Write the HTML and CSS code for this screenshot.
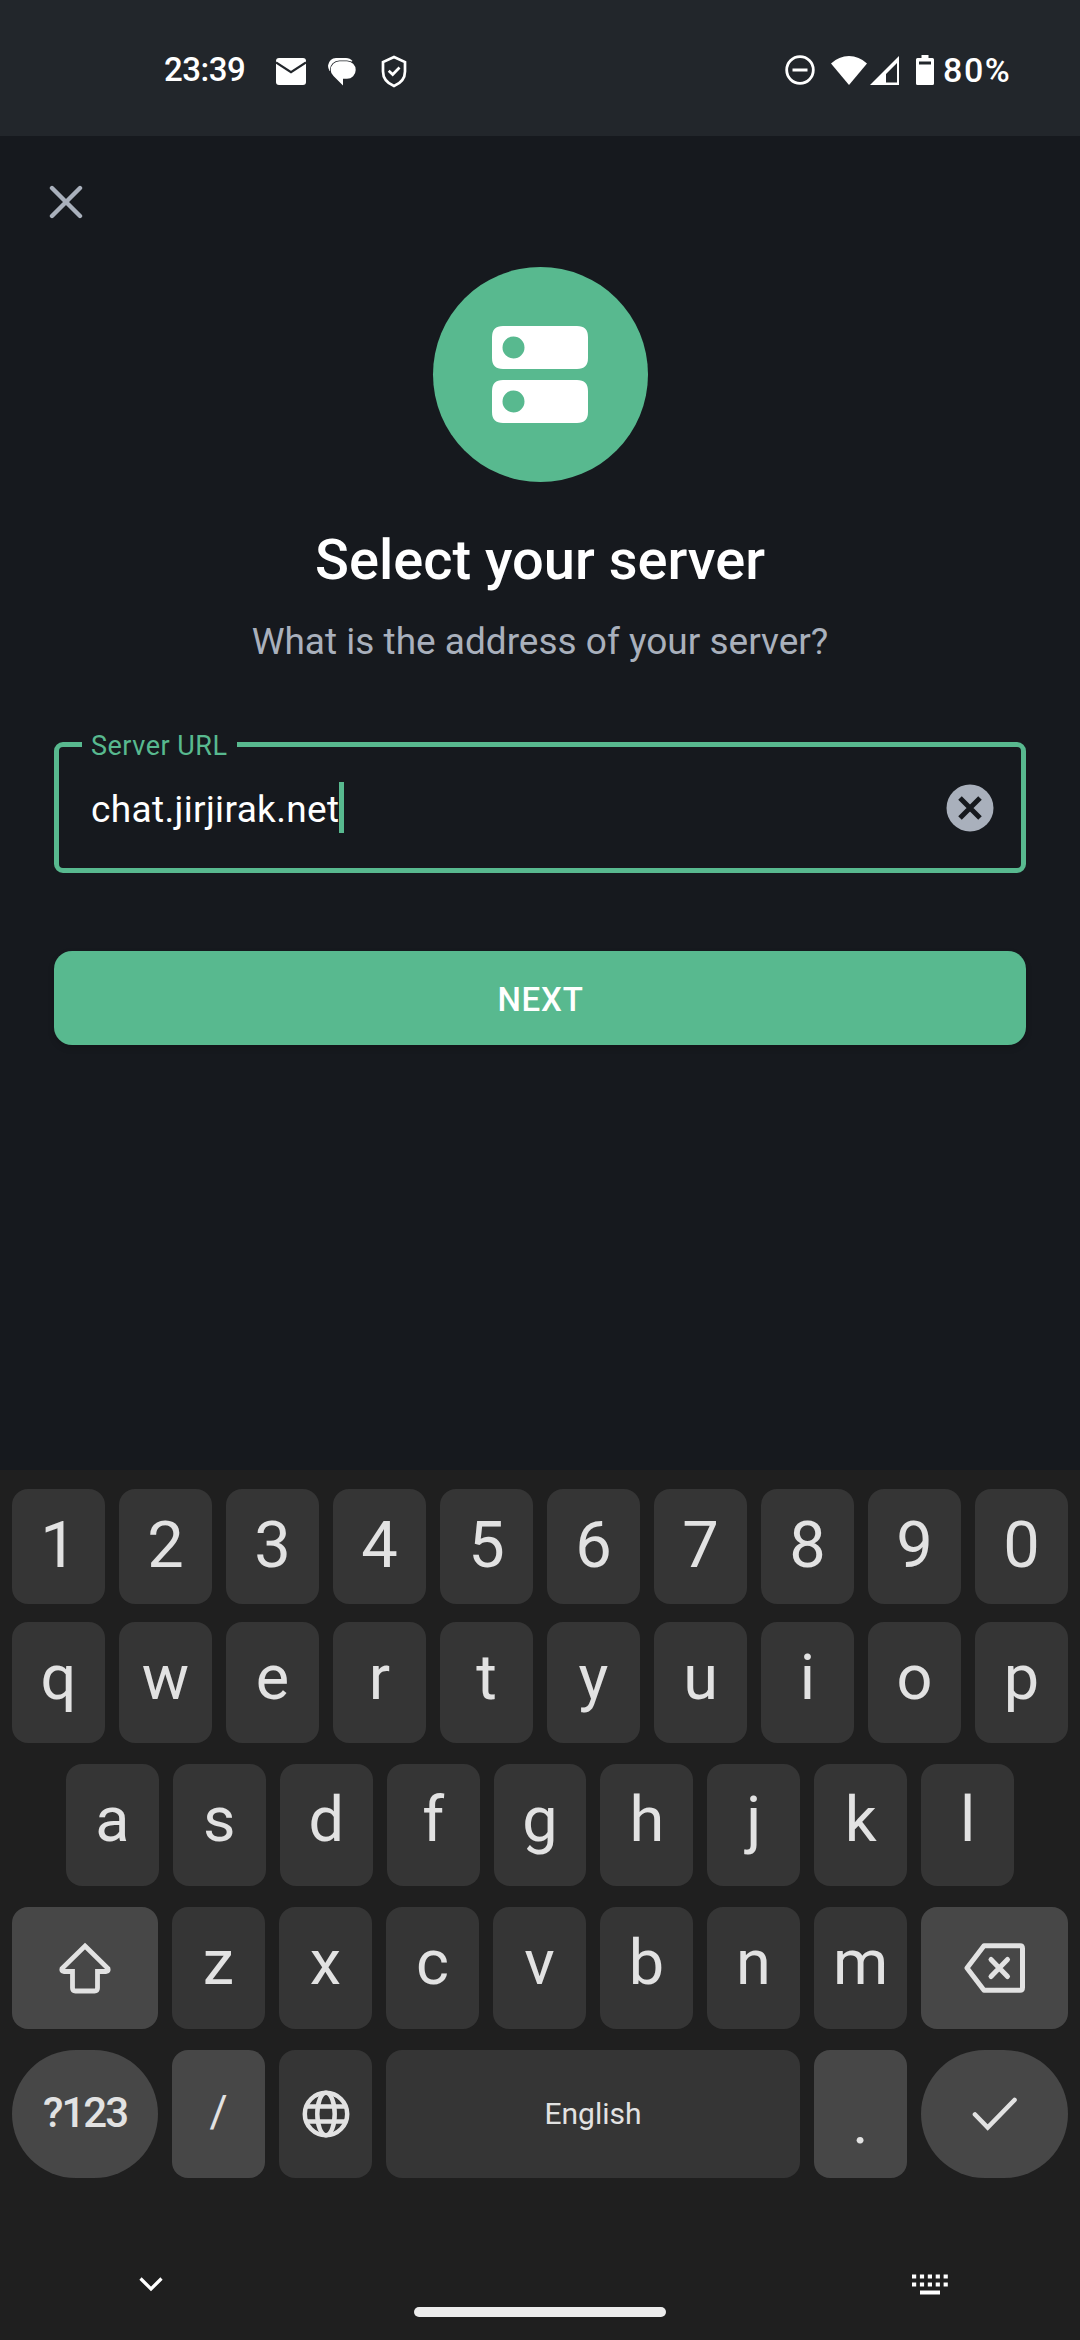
FILE: index.html
```html
<!DOCTYPE html>
<html lang="en">
<head>
<meta charset="utf-8">
<title>Select your server</title>
<link rel="stylesheet" href="styles.css">
</head>
<body>
<div class="screen">
  <header class="status">
    <div class="status-left">
      <span class="clock">23:39</span>
      <svg class="mail" width="30" height="27" viewBox="0 0 30 27"><rect width="30" height="27" rx="3" fill="#fff"/><path d="M0 4.500 15 14.200 30 4.500" fill="none" stroke="#22262b" stroke-width="2.200"/></svg>
      <svg class="chat" width="29" height="29" viewBox="0 0 29 29"><path d="M8 0H18Q22 0 24.500 3L8 14 1.500 13Q0 10 0 7.500Q1.500 0 8 0Z" fill="#fff"/><path d="M11.500 3.300H19A8.700 8.700 0 0 1 19 20.700H15V27.500L5.500 18Q2.700 15.500 2.700 12A8.700 8.700 0 0 1 11.500 3.300Z" fill="#fff" stroke="#22262b" stroke-width="1.800" paint-order="stroke"/></svg>
      <svg class="shield" width="26" height="33" viewBox="0 0 26 33"><path d="M13 2 24 7V16.500Q24 26.500 13 31 2 26.500 2 16.500V7Z" fill="none" stroke="#fff" stroke-width="2.700"/><path d="M7.700 15.700 11.700 19.500 18.500 12.500" fill="none" stroke="#fff" stroke-width="2.700"/></svg>
    </div>
    <div class="status-right">
      <svg width="30" height="30" viewBox="0 0 30 30"><circle cx="15" cy="15" r="13.300" fill="none" stroke="#fff" stroke-width="2.800"/><path d="M7.500 15H22.500" stroke="#fff" stroke-width="3"/></svg>
      <svg class="wifi" width="36" height="30" viewBox="0 0 36 30"><path d="M0 8.500Q8 1 18 1T36 8.500L18 30Z" fill="#fff"/></svg>
      <svg class="signal" width="29" height="30" viewBox="0 0 29 30"><path fill-rule="evenodd" d="M29 1V30H0ZM27 8 16 19V27.500H27Z" fill="#fff"/></svg>
      <svg class="battery" width="18" height="30" viewBox="0 0 18 30"><path fill-rule="evenodd" d="M5.500 0H12.500V3H16.500Q18 3 18 4.500V28.500Q18 30 16.500 30H1.500Q0 30 0 28.500V4.500Q0 3 1.500 3H5.500ZM3 6.500V9.500H15V6.500Z" fill="#fff"/></svg>
      <span class="percent">80%</span>
    </div>
  </header>

  <main class="content">
    <svg class="close" width="34" height="34" viewBox="0 0 34 34"><path d="M3 3 31 31M31 3 3 31" stroke="#a9b0bc" stroke-width="4.400" stroke-linecap="round"/></svg>
    <div class="logo">
      <svg width="96" height="98" viewBox="0 0 96 98"><path fill-rule="evenodd" d="M11 0H85Q96 0 96 11V32Q96 43 85 43H11Q0 43 0 32V11Q0 0 11 0ZM21.500 10.500A11 11 0 1 0 21.500 32.500A11 11 0 1 0 21.500 10.500ZM11 54H85Q96 54 96 65V86Q96 97 85 97H11Q0 97 0 86V65Q0 54 11 54ZM21.500 64.500A11 11 0 1 0 21.500 86.500A11 11 0 1 0 21.500 64.500Z" fill="#fff"/></svg>
    </div>
    <h1 class="title">Select your server</h1>
    <p class="subtitle">What is the address of your server?</p>
    <div class="field">
      <span class="label">Server URL</span>
      <span class="value">chat.jirjirak.net</span><span class="caret"></span>
      <svg class="clear" width="48" height="48" viewBox="0 0 48 48"><circle cx="24" cy="24" r="23.500" fill="#a9b0bc"/><path d="M14 14 34 34M34 14 14 34" stroke="#16191e" stroke-width="5"/></svg>
    </div>
    <button class="next">NEXT</button>
  </main>

  <section class="keyboard">
    <div class="row digits"><span class="key">1</span><span class="key">2</span><span class="key">3</span><span class="key">4</span><span class="key">5</span><span class="key">6</span><span class="key">7</span><span class="key">8</span><span class="key">9</span><span class="key">0</span></div>
    <div class="row top"><span class="key">q</span><span class="key">w</span><span class="key">e</span><span class="key">r</span><span class="key">t</span><span class="key">y</span><span class="key">u</span><span class="key">i</span><span class="key">o</span><span class="key">p</span></div>
    <div class="row home"><span class="key">a</span><span class="key">s</span><span class="key">d</span><span class="key">f</span><span class="key">g</span><span class="key">h</span><span class="key">j</span><span class="key">k</span><span class="key">l</span></div>
    <div class="row bottom">
      <span class="key mod shift"><svg width="54" height="52" viewBox="0 0 54 52"><path d="M27 4 50 26.500Q51 29.500 48 29.500H39.500V46Q39.500 49 36.500 49H17.500Q14.500 49 14.500 46V29.500H6Q3 29.500 4 26.500Z" fill="none" stroke="#e2e2e2" stroke-width="4.800"/></svg></span>
      <span class="key">z</span><span class="key">x</span><span class="key">c</span><span class="key">v</span><span class="key">b</span><span class="key">n</span><span class="key">m</span>
      <span class="key mod wide"><svg width="62" height="50" viewBox="0 0 62 50"><path d="M20 2.700H56Q58.500 2.700 58.500 5.500V44.500Q58.500 47.300 56 47.300H20L3 25Z" fill="none" stroke="#e2e2e2" stroke-width="5" stroke-linejoin="round"/><path d="M27 16.500 43.500 33.500M43.500 16.500 27 33.500" stroke="#e2e2e2" stroke-width="5" stroke-linecap="round"/></svg></span>
    </div>
    <div class="row space">
      <span class="key mod pill symbols">?123</span>
      <span class="key mod slash">/</span>
      <span class="key"><svg width="48" height="48" viewBox="0 0 48 48"><g fill="none" stroke="#e2e2e2" stroke-width="4.500"><circle cx="24" cy="24" r="21.200"/><ellipse cx="24" cy="24" rx="8.700" ry="21.200"/><path d="M4 16.500H44M4 31.500H44"/></g></svg></span>
      <span class="key spacebar">English</span>
      <span class="key mod dot">.</span>
      <span class="key mod pill wide"><svg width="46" height="34" viewBox="0 0 46 34"><path d="M3 17.500 15.700 30.500 42.500 3" fill="none" stroke="#e2e2e2" stroke-width="4.600" stroke-linecap="round"/></svg></span>
    </div>
    <footer class="nav">
      <svg class="chevron" width="24" height="15" viewBox="0 0 24 15"><path d="M1.500 1.500 12 12 22.500 1.500" fill="none" stroke="#fff" stroke-width="3.200"/></svg>
      <span class="pillbar"></span>
      <svg class="switcher" width="37" height="21" viewBox="0 0 37 21"><path d="M0 2.500H37M0 10.500H37" stroke="#fff" stroke-width="4.200" stroke-dasharray="4.200 3.700"/><path d="M8 18.500H28" stroke="#fff" stroke-width="4"/></svg>
    </footer>
  </section>
</div>
</body>
</html>
```
FILE: styles.css
```css
* { box-sizing: border-box; }
body { margin: 0; background: #16191e; font-family: Roboto, sans-serif; }
svg { display: block; flex: none; }
.screen { width: 1080px; height: 2340px; display: flex; flex-direction: column; overflow: hidden; }

.status { height: 136px; flex: none; padding: 0 69px 0 164px; background: #22262b; color: #fff; display: flex; justify-content: space-between; align-items: flex-start; font-size: 33px; font-weight: 500; line-height: 40px; }
.status-left, .status-right { display: flex; align-items: center; height: 40px; margin-top: 50px; }
.clock { width: 112px; letter-spacing: -0.5px; }
.mail { margin-top: 3px; }
.chat { margin: 5px 24px 0 22px; }
.shield { margin-top: 2px; }
.wifi { margin-left: 16px; }
.signal { margin-left: 3px; }
.battery { margin: 0 9px 0 17px; }
.percent { width: 68px; font-size: 34px; letter-spacing: 1.6px; white-space: nowrap; }

.content { flex: 1; padding: 49px 54px 0; display: flex; flex-direction: column; align-items: center; }
.close { align-self: flex-start; margin-left: -5px; }
.logo { width: 215px; height: 215px; flex: none; margin-top: 48px; border-radius: 50%; background: #58b98f; display: flex; align-items: center; justify-content: center; }
.title { margin: 43px 0 0; color: #fff; font-size: 56px; font-weight: 500; line-height: 70px; }
.subtitle { margin: 23px 0 0; color: #a9b0bc; font-size: 37px; line-height: 48px; }
.field { position: relative; width: 972px; height: 131px; flex: none; margin-top: 76px; padding: 0 27px 0 32px; border: 5px solid #58b98f; border-radius: 9px; display: flex; align-items: center; }
.label { position: absolute; left: 23px; top: -17px; width: 155px; padding-left: 9px; background: #16191e; color: #58b98f; font-size: 27px; line-height: 32px; letter-spacing: 0.5px; white-space: nowrap; }
.value { padding-top: 4px; color: #fff; font-size: 37px; line-height: 51px; letter-spacing: 0.35px; }
.caret { width: 5px; height: 51px; margin-left: -1px; background: #58b98f; }
.clear { margin-left: auto; }
.next { width: 972px; height: 94px; flex: none; margin-top: 78px; padding: 3px 0 0 1px; border: 0; border-radius: 18px; background: #58b98f; box-shadow: 0 3px 6px rgba(0, 0, 0, .18); color: #fff; font-family: inherit; font-size: 33px; font-weight: 500; letter-spacing: 0.8px; }

.keyboard { height: 870px; flex: none; padding: 19px 12px 0; background: #1f1f1f; color: #e2e2e2; font-size: 63px; }
.row { display: flex; gap: 14px; }
.key { flex: 1 1 0; height: 100%; border-radius: 16px; background: #353535; display: flex; align-items: center; justify-content: center; line-height: 1; }
.mod { background: #474747; }
.digits { height: 115px; font-size: 65px; }
.digits .key { padding-bottom: 2px; }
.top { height: 121px; margin-top: 18px; }
.top .key { padding-bottom: 11px; }
.home { height: 122px; margin-top: 21px; padding: 0 54px; }
.home .key { padding-bottom: 12px; }
.bottom { height: 122px; margin-top: 21px; }
.bottom .key:not(.mod) { padding-bottom: 12px; }
.space { height: 128px; margin-top: 21px; }
.shift, .symbols { flex: 0 0 146px; }
.wide { flex: 0 0 147px; }
.pill { border-radius: 64px; }
.symbols { padding-bottom: 2px; font-size: 42px; font-weight: 500; letter-spacing: -2px; }
.slash { padding-bottom: 4px; font-size: 44px; }
.spacebar { flex: 0 0 414px; font-size: 30px; }
.dot { padding-top: 18px; font-size: 60px; }
.nav { display: grid; grid-template-columns: 1fr 252px 1fr; height: 162px; padding-top: 96px; align-items: start; }
.chevron { margin: 3px 0 0 127px; }
.pillbar { height: 10px; margin-top: 33px; border-radius: 5px; background: #ececec; }
.switcher { margin-left: 246px; }
```
